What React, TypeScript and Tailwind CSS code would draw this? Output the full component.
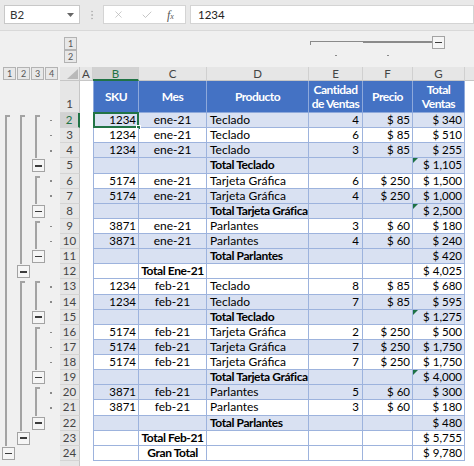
import React from "react";
import { X, Check, EllipsisVertical } from "lucide-react";

type Row = {
  n: number;
  band: boolean;
  sku?: string;
  mes?: string;
  prod?: string;
  qty?: string;
  price?: string;
  total: string;
  boldProd?: boolean;
  boldMes?: boolean;
  flag?: boolean;
};

const rows: Row[] = [
  { n: 2, band: true, sku: "1234", mes: "ene-21", prod: "Teclado", qty: "4", price: "$ 85", total: "$ 340" },
  { n: 3, band: false, sku: "1234", mes: "ene-21", prod: "Teclado", qty: "6", price: "$ 85", total: "$ 510" },
  { n: 4, band: true, sku: "1234", mes: "ene-21", prod: "Teclado", qty: "3", price: "$ 85", total: "$ 255" },
  { n: 5, band: true, prod: "Total Teclado", boldProd: true, total: "$ 1,105", flag: true },
  { n: 6, band: false, sku: "5174", mes: "ene-21", prod: "Tarjeta Gráfica", qty: "6", price: "$ 250", total: "$ 1,500" },
  { n: 7, band: true, sku: "5174", mes: "ene-21", prod: "Tarjeta Gráfica", qty: "4", price: "$ 250", total: "$ 1,000" },
  { n: 8, band: true, prod: "Total Tarjeta Gráfica", boldProd: true, total: "$ 2,500", flag: true },
  { n: 9, band: false, sku: "3871", mes: "ene-21", prod: "Parlantes", qty: "3", price: "$ 60", total: "$ 180" },
  { n: 10, band: true, sku: "3871", mes: "ene-21", prod: "Parlantes", qty: "4", price: "$ 60", total: "$ 240" },
  { n: 11, band: true, prod: "Total Parlantes", boldProd: true, total: "$ 420" },
  { n: 12, band: false, mes: "Total Ene-21", boldMes: true, total: "$ 4,025" },
  { n: 13, band: false, sku: "1234", mes: "feb-21", prod: "Teclado", qty: "8", price: "$ 85", total: "$ 680" },
  { n: 14, band: true, sku: "1234", mes: "feb-21", prod: "Teclado", qty: "7", price: "$ 85", total: "$ 595" },
  { n: 15, band: true, prod: "Total Teclado", boldProd: true, total: "$ 1,275", flag: true },
  { n: 16, band: false, sku: "5174", mes: "feb-21", prod: "Tarjeta Gráfica", qty: "2", price: "$ 250", total: "$ 500" },
  { n: 17, band: true, sku: "5174", mes: "feb-21", prod: "Tarjeta Gráfica", qty: "7", price: "$ 250", total: "$ 1,750" },
  { n: 18, band: false, sku: "5174", mes: "feb-21", prod: "Tarjeta Gráfica", qty: "7", price: "$ 250", total: "$ 1,750" },
  { n: 19, band: true, prod: "Total Tarjeta Gráfica", boldProd: true, total: "$ 4,000", flag: true },
  { n: 20, band: true, sku: "3871", mes: "feb-21", prod: "Parlantes", qty: "5", price: "$ 60", total: "$ 300" },
  { n: 21, band: false, sku: "3871", mes: "feb-21", prod: "Parlantes", qty: "3", price: "$ 60", total: "$ 180" },
  { n: 22, band: true, prod: "Total Parlantes", boldProd: true, total: "$ 480" },
  { n: 23, band: false, mes: "Total Feb-21", boldMes: true, total: "$ 5,755" },
  { n: 24, band: false, mes: "Gran Total", boldMes: true, total: "$ 9,780" },
];

// outline groups: [level, first row, last row] -> minus box sits on last + 1
const groups: [number, number, number][] = [
  [0, 2, 23],
  [1, 2, 11],
  [1, 13, 22],
  [2, 2, 4],
  [2, 6, 7],
  [2, 9, 10],
  [2, 13, 14],
  [2, 16, 18],
  [2, 20, 21],
];

type SlotKind = "start" | "line" | "box" | "dot" | null;

const slotFor = (level: number, n: number): SlotKind => {
  if (level === 3) {
    return groups.some(([l, a, b]) => l === 2 && n >= a && n <= b) ? "dot" : null;
  }
  for (const [l, a, b] of groups) {
    if (l !== level) continue;
    if (n === a) return "start";
    if (n > a && n <= b) return "line";
    if (n === b + 1) return "box";
  }
  return null;
};

const MinusBox = () => (
  <div className="h-[13px] w-[13px] shrink-0 border border-[#a3a3a3] bg-[#f5f5f5] flex items-center justify-center">
    <div className="h-[1.5px] w-[7px] bg-[#3c3c3c]" />
  </div>
);

const Slot = ({ kind, narrow }: { kind: SlotKind; narrow?: boolean }) => (
  <div className={`${narrow ? "w-[14px]" : "w-[15px]"} h-full flex flex-col shrink-0`}>
    {kind === "start" && (
      <div className="ml-[4px] mt-[2px] w-[5px] flex-1 border-l-2 border-t-2 border-[#a3a3a3]" />
    )}
    {kind === "line" && <div className="ml-[4px] flex-1 border-l-2 border-[#a3a3a3]" />}
    {kind === "box" && (
      <div className="ml-[1px] mt-[1px]">
        <MinusBox />
      </div>
    )}
    {kind === "dot" && <div className="ml-[4px] my-auto h-[1.5px] w-[1.5px] bg-[#8a8a8a]" />}
  </div>
);

const Gutter = ({ n }: { n: number }) => (
  <div className="w-[60px] h-full shrink-0 bg-[#f0f0f0] flex pl-[1px]">
    <Slot kind={slotFor(0, n)} />
    <Slot kind={slotFor(1, n)} />
    <Slot kind={slotFor(2, n)} />
    <Slot kind={slotFor(3, n)} narrow />
  </div>
);

const RowHead = ({ n, selected, bottom }: { n?: number; selected?: boolean; bottom?: boolean }) => (
  <div
    className={`w-[20px] h-full shrink-0 border-b border-[#d4d4d4] flex justify-center text-[11.5px] leading-[14px] ${
      bottom ? "items-end pb-[1px]" : "items-center"
    } ${
      selected
        ? "bg-[#d2d2d2] text-[#217346] border-r-2 border-r-[#217346]"
        : "bg-[#e6e6e6] text-[#444] border-r border-r-[#c6c6c6]"
    }`}
  >
    {n}
  </div>
);

const LevelBtn = ({ children }: { children: React.ReactNode }) => (
  <div className="w-[13px] h-[13px] shrink-0 border border-[#b3b3b3] bg-[#e8e8e8] flex items-center justify-center text-[9px] leading-none text-[#555]">
    {children}
  </div>
);

const ColHead = ({ w, label, selected }: { w: string; label: string; selected?: boolean }) => (
  <div
    className={`${w} h-full shrink-0 border-r border-[#d0d0d0] flex items-center justify-center text-[11.5px] leading-[13px] ${
      selected
        ? "bg-[#d2d2d2] text-[#217346] border-b-2 border-b-[#217346]"
        : "bg-[#e6e6e6] text-[#444] border-b border-b-[#c6c6c6]"
    }`}
  >
    {label}
  </div>
);

const bold = "font-bold text-[12px] tracking-[-0.4px]";

const DataRow = ({ r }: { r: Row }) => {
  const bg = r.band ? "bg-[#d9e1f2]" : "bg-white";
  const cell = `h-full shrink-0 border-r border-b border-[#9db3dd] ${bg} flex items-center whitespace-nowrap leading-[14px]`;
  return (
    <div className="flex h-[15.13px]">
      <Gutter n={r.n} />
      <RowHead n={r.n} selected={r.n === 2} />
      <div className="w-[13px] h-full shrink-0 bg-white" />
      <div className={`${cell} w-[46px] border-l justify-end pr-[2px] relative text-[11.5px]`}>
        {r.sku}
        {r.n === 2 && (
          <>
            <div className="absolute -left-[1px] -top-[1px] -right-[1px] -bottom-[1px] border-2 border-[#217346]" />
            <div className="absolute -right-[3px] -bottom-[3px] w-[5px] h-[5px] bg-[#217346] border border-white" />
          </>
        )}
      </div>
      <div className={`${cell} w-[68px] justify-center ${r.boldMes ? bold : "text-[12px]"}`}>{r.mes}</div>
      <div className={`${cell} w-[102px] pl-[3px] ${r.boldProd ? bold : "text-[12px]"}`}>{r.prod}</div>
      <div className={`${cell} w-[54px] justify-end pr-[3px] text-[11.5px]`}>{r.qty}</div>
      <div className={`${cell} w-[50px] justify-end pr-[2px] text-[11.5px]`}>{r.price}</div>
      <div className={`${cell} w-[52px] justify-end pr-[2px] relative text-[11.5px]`}>
        {r.flag && (
          <svg className="absolute left-0 top-0" width="5" height="5">
            <polygon points="0,0 5,0 0,5" fill="#1e7145" />
          </svg>
        )}
        {r.total}
      </div>
      <div className="flex-1 h-full bg-white" />
    </div>
  );
};

const headCell =
  "h-full shrink-0 bg-[#4472c4] border-r border-b border-[#8ea9db] flex items-center justify-center text-center text-white font-bold text-[12px] tracking-[-0.5px] leading-[14px]";

export default function App() {
  return (
    <div className="w-[474px] h-[466px] overflow-hidden bg-white font-['Lato',sans-serif] text-[11px] text-black">
      {/* formula bar */}
      <div className="h-[31px] bg-[#e9e9e9] border-b border-[#d9d9d9] flex items-center pl-[4px] pb-[1px]">
        <div className="w-[76px] h-[19px] bg-white border border-[#c8c8c8] flex items-center justify-between pl-[5px] pr-[5px] text-[#333] text-[11.5px]">
          <span>B2</span>
          <svg width="7" height="4">
            <polygon points="0,0 7,0 3.5,4" fill="#666" />
          </svg>
        </div>
        <div className="w-[23px] flex justify-center text-[#b5b5b5]">
          <EllipsisVertical size={12} strokeWidth={2} />
        </div>
        <div className="w-[83px] h-[19px] bg-white border border-[#d4d4d4] flex items-center">
          <X size={11} strokeWidth={1.5} className="ml-[9px] text-[#b3b3b3]" />
          <Check size={12} strokeWidth={1.5} className="ml-[17px] text-[#b3b3b3]" />
          <span className="ml-[14px] italic font-['Liberation_Serif',serif] text-[12px] text-[#555]">
            f<span className="text-[8px]">x</span>
          </span>
        </div>
        <div className="ml-[4px] flex-1 h-[19px] bg-white border border-[#d4d4d4] flex items-center pl-[7px] text-[#222] text-[11.5px]">
          1234
        </div>
      </div>

      {/* column outline */}
      <div className="h-[36px] bg-[#f0f0f0] flex">
        <div className="w-[60px] shrink-0" />
        <div className="w-[20px] shrink-0 flex flex-col items-end pr-[3px] pt-[6px]">
          <LevelBtn>1</LevelBtn>
          <LevelBtn>2</LevelBtn>
        </div>
        <div className="flex flex-col pt-[5px]">
          <div className="flex h-[13px]">
            <div className="w-[229px] shrink-0" />
            <div className="w-[54px] shrink-0 pt-[5px]">
              <div className="ml-[1px] h-[4px] border-l-[1.5px] border-t-[1.5px] border-[#8a8a8a]" />
            </div>
            <div className="w-[50px] shrink-0 pt-[5px]">
              <div className="h-[1.5px] bg-[#8a8a8a]" />
            </div>
            <div className="w-[52px] shrink-0 flex">
              <div className="w-[19px] shrink-0 pt-[5px]">
                <div className="h-[1.5px] bg-[#8a8a8a]" />
              </div>
              <MinusBox />
            </div>
          </div>
          <div className="flex h-[13px] items-center">
            <div className="w-[229px] shrink-0" />
            <div className="w-[54px] shrink-0 flex justify-center">
              <div className="h-[1.5px] w-[1.5px] bg-[#8a8a8a]" />
            </div>
            <div className="w-[50px] shrink-0 flex justify-center">
              <div className="h-[1.5px] w-[1.5px] bg-[#8a8a8a]" />
            </div>
          </div>
        </div>
      </div>

      {/* column headers */}
      <div className="h-[14px] flex">
        <div className="w-[60px] shrink-0 bg-[#f0f0f0] flex gap-[1px] pl-[3px]">
          <LevelBtn>1</LevelBtn>
          <LevelBtn>2</LevelBtn>
          <LevelBtn>3</LevelBtn>
          <LevelBtn>4</LevelBtn>
        </div>
        <div className="w-[20px] h-full shrink-0 bg-[#e6e6e6] border-r border-b border-[#c6c6c6] flex items-end justify-end pr-[1px] pb-[1px]">
          <svg width="11" height="10">
            <polygon points="11,0 11,10 0,10" fill="#b9b9b9" />
          </svg>
        </div>
        <ColHead w="w-[13px]" label="A" />
        <ColHead w="w-[46px]" label="B" selected />
        <ColHead w="w-[68px]" label="C" />
        <ColHead w="w-[102px]" label="D" />
        <ColHead w="w-[54px]" label="E" />
        <ColHead w="w-[50px]" label="F" />
        <ColHead w="w-[52px]" label="G" />
        <div className="flex-1 h-full bg-[#e6e6e6] border-b border-[#c6c6c6]" />
      </div>

      {/* table header row */}
      <div className="flex h-[32px]">
        <div className="w-[60px] h-full shrink-0 bg-[#f0f0f0]" />
        <RowHead n={1} bottom />
        <div className="w-[13px] h-full shrink-0 bg-white" />
        <div className={`${headCell} w-[46px] border-l`}>SKU</div>
        <div className={`${headCell} w-[68px]`}>Mes</div>
        <div className={`${headCell} w-[102px]`}>Producto</div>
        <div className={`${headCell} w-[54px]`}>
          Cantidad
          <br />
          de Ventas
        </div>
        <div className={`${headCell} w-[50px]`}>Precio</div>
        <div className={`${headCell} w-[52px]`}>
          Total
          <br />
          Ventas
        </div>
        <div className="flex-1 h-full bg-white" />
      </div>

      {rows.map((r) => (
        <DataRow key={r.n} r={r} />
      ))}

      <div className="flex h-[15px]">
        <div className="w-[60px] h-full shrink-0 bg-[#f0f0f0]" />
        <RowHead />
        <div className="flex-1 h-full bg-white" />
      </div>
    </div>
  );
}
